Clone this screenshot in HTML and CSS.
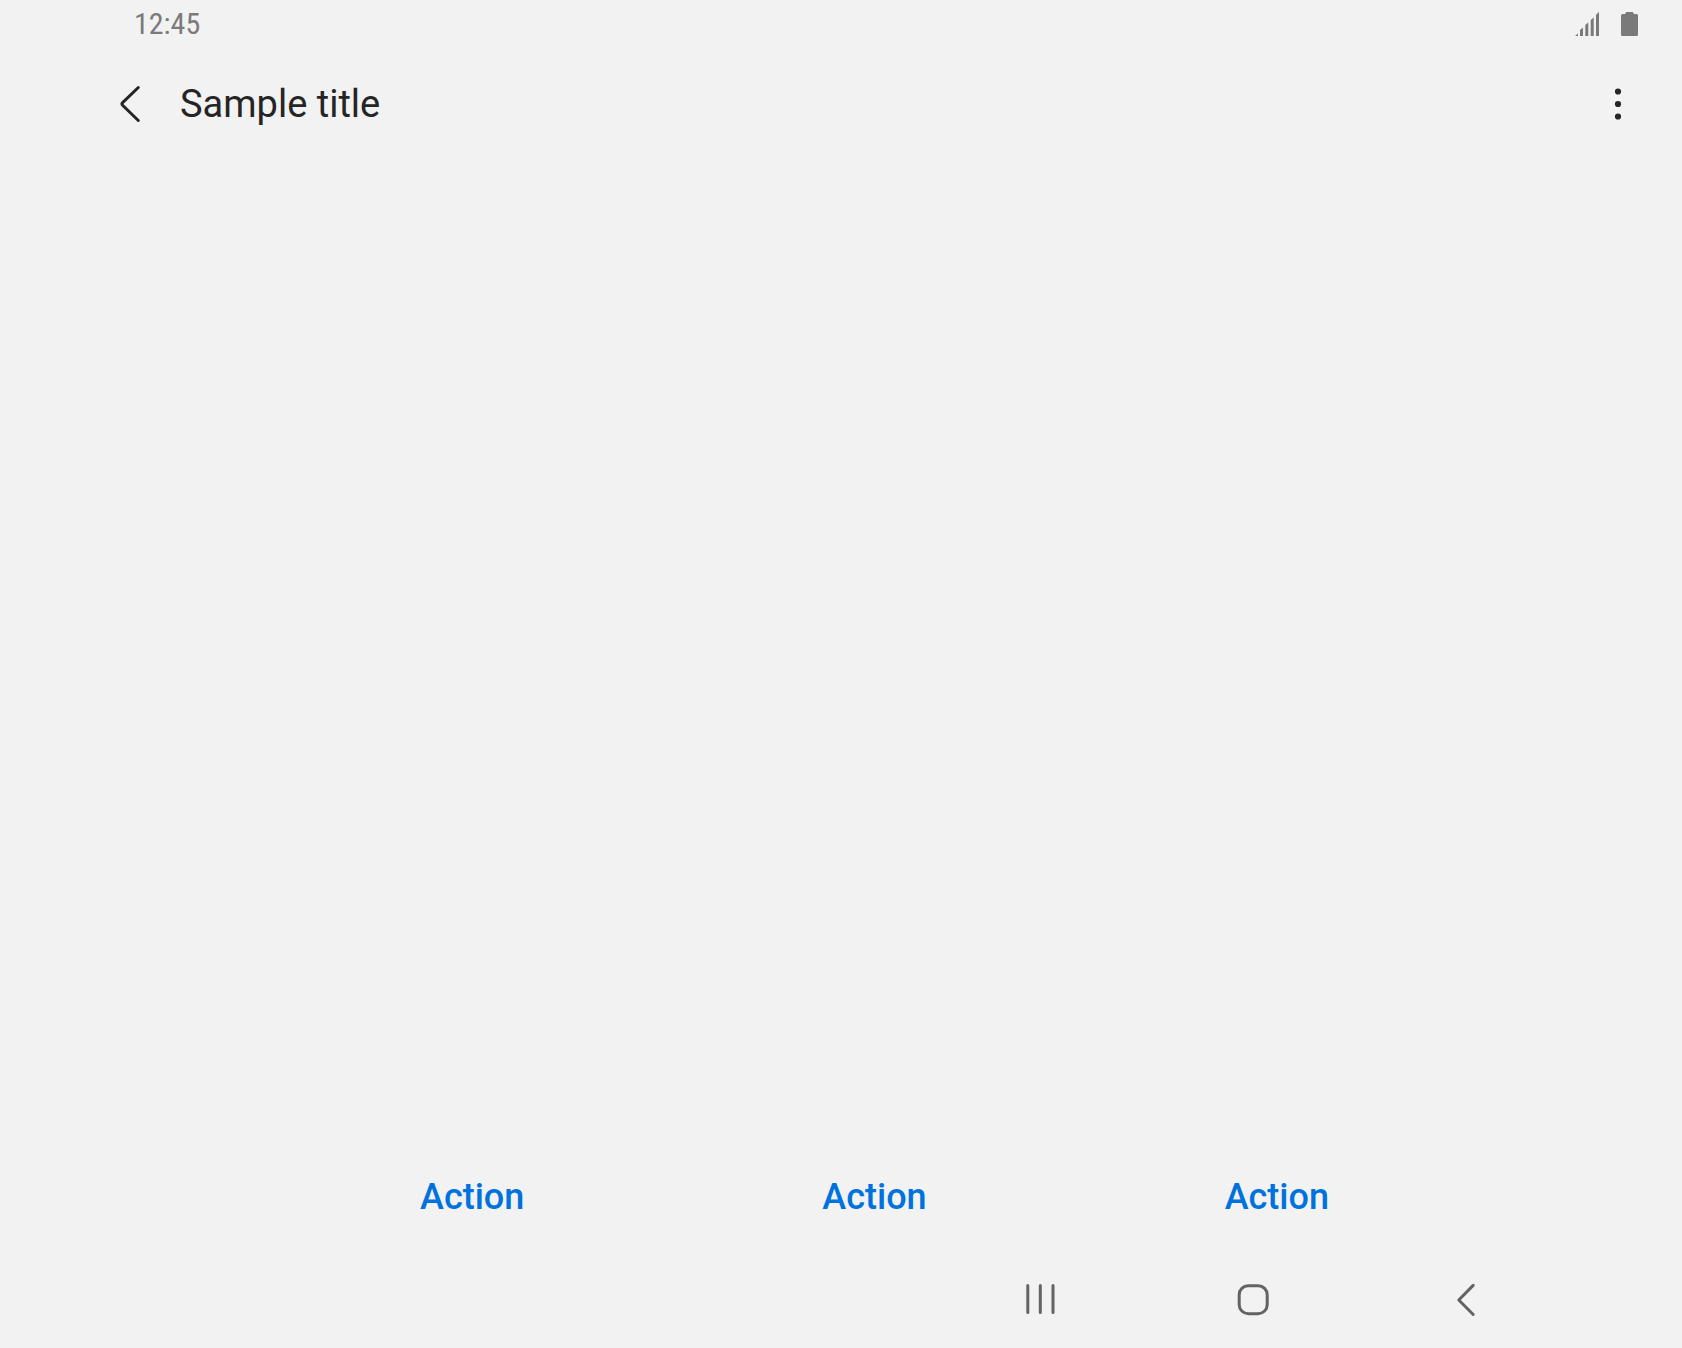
FILE: index.html
```html
<!DOCTYPE html>
<html lang="en">
<head>
<meta charset="utf-8">
<meta name="viewport" content="width=device-width, initial-scale=1">
<title>Sample title</title>
<link rel="stylesheet" href="styles.css">
</head>
<body>
<div class="status-bar">
  <time class="clock">12:45</time>
  <div class="status-icons">
    <svg class="signal" viewBox="0 0 24 24" aria-label="Signal"><path d="M0 24l3-2.500V24zM5 24v-6l3-2.500V24zM10.300 24V13l3-2.500V24zM15.700 24V8l3-2.500V24zM21 24V2.800L24 0v24z"/></svg>
    <svg class="battery" viewBox="0 0 17 24" aria-label="Battery"><path d="M5.500 0h6q1 0 1.300 2H15.500a1.500 1.500 0 0 1 1.500 1.500v19a1.500 1.500 0 0 1-1.500 1.500h-14A1.500 1.500 0 0 1 0 22.500v-19A1.500 1.500 0 0 1 1.500 2h2.700q.3-2 1.300-2z"/></svg>
  </div>
</div>
<header class="app-bar">
  <button class="icon-button" aria-label="Navigate up"><svg class="icon" viewBox="0 0 40 40"><path d="M28.300 3.500L12.600 18.700q-1.300 1.300 0 2.600L28.300 36.500"/></svg></button>
  <h1 class="title">Sample title</h1>
  <button class="icon-button" aria-label="More options"><svg class="icon dots" viewBox="0 0 40 40"><circle cx="20" cy="7.500" r="3.100"/><circle cx="20" cy="20" r="3.100"/><circle cx="20" cy="32.500" r="3.100"/></svg></button>
</header>
<main class="content"></main>
<div class="actions">
  <button class="action">Action</button>
  <button class="action">Action</button>
  <button class="action">Action</button>
</div>
<nav class="nav-bar">
  <button class="icon-button" aria-label="Recents"><svg class="icon" viewBox="0 0 40 40"><path d="M7.800 5.500v27M20.300 5.500v27M33 5.500v27"/></svg></button>
  <button class="icon-button" aria-label="Home"><svg class="icon" viewBox="0 0 40 40"><rect x="6.200" y="5.700" width="28" height="28" rx="9"/></svg></button>
  <button class="icon-button" aria-label="Back"><svg class="icon" viewBox="0 0 40 40"><path d="M27.200 5.400L12.800 20l14.400 14.500"/></svg></button>
</nav>
</body>
</html>
```
FILE: styles.css
```css
* { box-sizing: border-box; }
body {
  margin: 0;
  min-height: 100vh;
  display: flex;
  flex-direction: column;
  background: #f2f2f2;
  color: #252525;
  font-family: Roboto, sans-serif;
}
button {
  border: 0;
  padding: 0;
  background: none;
  color: inherit;
  font: inherit;
}
.status-bar {
  height: 48px;
  padding: 0 44px 0 134px;
  display: flex;
  align-items: center;
  justify-content: space-between;
  color: #7a7a7a;
}
.clock {
  padding-bottom: 2px;
  font-family: "Roboto Condensed", Roboto, sans-serif;
  font-size: 30px;
}
.status-icons { display: flex; gap: 22px; fill: currentColor; }
.signal { width: 24px; height: 24px; }
.battery { width: 17px; height: 24px; }
.app-bar {
  height: 112px;
  padding: 0 44px 0 110px;
  display: flex;
  align-items: center;
}
.title {
  flex: 1;
  margin: 0 0 0 30px;
  font-size: 38px;
  font-weight: 400;
}
.icon-button { width: 40px; height: 40px; }
.icon {
  display: block;
  width: 40px;
  height: 40px;
  fill: none;
  stroke: currentColor;
  stroke-width: 3;
  stroke-linecap: round;
  stroke-linejoin: round;
}
.dots { fill: currentColor; stroke: none; }
.content { flex: 1; }
.actions {
  padding: 0 204px 6px 271px;
  height: 104px;
  display: grid;
  grid-template-columns: repeat(3, 1fr);
}
.action { color: #0072de; font-size: 36px; font-weight: 500; }
.nav-bar {
  height: 96px;
  padding: 0 196px;
  display: flex;
  align-items: center;
  justify-content: flex-end;
  gap: 173px;
  color: #636363;
}
```
